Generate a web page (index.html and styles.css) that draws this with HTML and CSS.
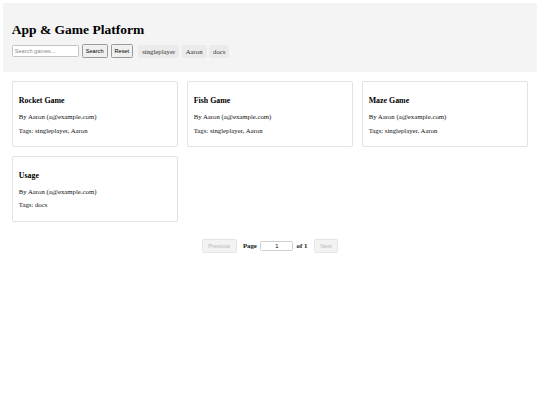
FILE: index.html
```html
<html>
    <head>
        <title>App &amp; Game Platform</title>
        <link rel="stylesheet" href="styles.css">
    </head>
    <body>
        <header>
            <h1>App &amp; Game Platform</h1>
            <div class="controls">
                <input type="text" class="search" placeholder="Search games...">
                <button>Search</button>
                <button>Reset</button>
                <div class="tags">
                    <span class="tag">singleplayer</span>
                    <span class="tag">Aaron</span>
                    <span class="tag">docs</span>
                </div>
            </div>
        </header>

        <div class="grid">
            <div class="card">
                <h3>Rocket Game</h3>
                <p>By Aaron (a@example.com)</p>
                <p>Tags: singleplayer, Aaron</p>
            </div>
            <div class="card">
                <h3>Fish Game</h3>
                <p>By Aaron (a@example.com)</p>
                <p>Tags: singleplayer, Aaron</p>
            </div>
            <div class="card">
                <h3>Maze Game</h3>
                <p>By Aaron (a@example.com)</p>
                <p>Tags: singleplayer, Aaron</p>
            </div>
            <div class="card">
                <h3>Usage</h3>
                <p>By Aaron (a@example.com)</p>
                <p>Tags: docs</p>
            </div>
        </div>

        <div class="pagination">
            <button class="page-btn" disabled>Previous</button>
            <b>Page</b>
            <input type="text" class="page-input" value="1">
            <b>of 1</b>
            <button class="page-btn" disabled>Next</button>
        </div>
    </body>
</html>
```
FILE: styles.css
```css
body{
    margin: 3.4px;
    font-family: "Liberation Serif", serif;
    font-size: 6.75px;
    color: #111;
}
header{
    background-color: #f4f4f4;
    padding: 8.4px 8.4px 13.9px;
}
h1{
    font-size: 13.5px;
    margin: 10px 0 6.5px;
    color: black;
}
.controls{
    display: flex;
    align-items: center;
}
.search{
    box-sizing: border-box;
    width: 67px;
    height: 12px;
    padding: 0 2px;
    font-size: 5.6px;
    font-family: "Liberation Sans", sans-serif;
    border: 1px solid #c4c4c4;
    border-radius: 1.5px;
    outline: none;
}
.search::placeholder{
    color: #8a8a8a;
}
button{
    height: 14px;
    padding: 0 3px;
    margin-left: 3px;
    font-size: 5.6px;
    font-family: "Liberation Sans", sans-serif;
    color: black;
    background-color: #f0f0f0;
    border: 1px solid #9a9a9a;
    border-radius: 1.5px;
}
.tags{
    display: flex;
    margin-left: 5px;
    gap: 2.5px;
}
.tag{
    background-color: #ebebeb;
    padding: 2.8px 4px;
    border-radius: 2px;
    color: #333;
}
.grid{
    display: grid;
    grid-template-columns: repeat(3, 1fr);
    gap: 8.4px;
    padding: 9px 8.4px 8.4px;
}
.card{
    background: white;
    border: 1px solid #e2e2e2;
    border-radius: 2px;
    padding: 6px;
}
h3{
    font-size: 7.9px;
    margin: 7.9px 0;
    color: black;
}
p{
    margin: 6.75px 0;
}
.pagination{
    display: flex;
    justify-content: center;
    align-items: center;
    gap: 3.4px;
    margin-top: 8.4px;
}
.page-btn{
    padding: 0 5.5px;
    margin: 0 3px;
    color: #b4b4b4;
    background-color: #f3f3f3;
    border: 1px solid #e4e4e4;
}
.page-input{
    box-sizing: border-box;
    width: 33px;
    height: 10.7px;
    padding: 0;
    text-align: center;
    font-size: 5.6px;
    font-family: "Liberation Sans", sans-serif;
    border: 1px solid #cfcfcf;
    border-radius: 1.5px;
}
```
